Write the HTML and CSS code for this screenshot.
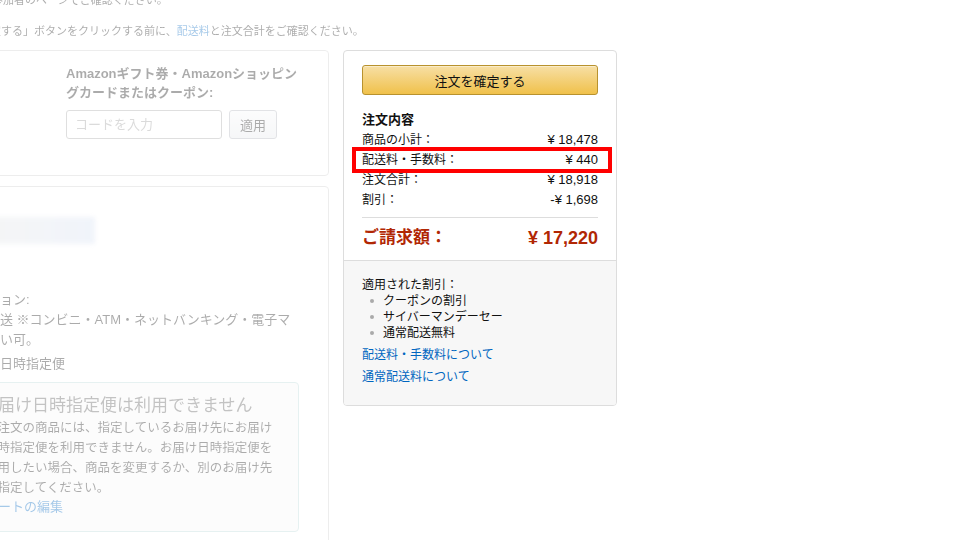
FILE: index.html
```html
<!DOCTYPE html>
<html lang="ja">
<head>
    <meta charset="UTF-8">
    <meta name="viewport" content="width=device-width, initial-scale=1.0">
    <title>注文の確定 | Amazon.co.jp</title>
    <link rel="stylesheet" href="styles.css">
</head>
<body>
    <div class="notes">
        <p class="note-first">参加者のページでご確認ください。</p>
        <p class="note-second">「注文を確定する」ボタンをクリックする前に、<a href="#">配送料</a>と注文合計をご確認ください。</p>
    </div>

    <div class="checkout">
        <div class="left-col">
            <div class="box payment-box">
                <div class="pay-methods"></div>
                <div class="coupon">
                    <label for="claimCode">Amazonギフト券・Amazonショッピングカードまたはクーポン:</label>
                    <div class="coupon-row">
                        <input type="text" id="claimCode" placeholder="コードを入力">
                        <button type="button" class="btn-apply">適用</button>
                    </div>
                </div>
            </div>

            <div class="box shipment-box">
                <div class="ship-col">
                    <div class="address-blur"></div>
                    <p class="ship-title">配送オプション:</p>
                    <p class="ship-option"><span class="radio"></span>通常配送 ※コンビニ・ATM・ネットバンキング・電子マ<br><span class="radio-pad"></span>ネー払い可。</p>
                    <p class="ship-option second"><span class="radio"></span>お届け日時指定便</p>

                    <div class="alert">
                        <h4>お届け日時指定便は利用できません</h4>
                        <p>ご注文の商品には、指定しているお届け先にお届け<br>日時指定便を利用できません。お届け日時指定便を<br>利用したい場合、商品を変更するか、別のお届け先<br>を指定してください。</p>
                        <a href="#">カートの編集</a>
                    </div>
                </div>
            </div>
        </div>

        <aside class="summary">
            <div class="summary-main">
                <button type="button" class="btn-place">注文を確定する</button>
                <h3>注文内容</h3>
                <div class="row"><span>商品の小計：</span><span class="amount">¥ 18,478</span></div>
                <div class="row marked"><span>配送料・手数料：</span><span class="amount">¥ 440</span></div>
                <div class="row"><span>注文合計：</span><span class="amount">¥ 18,918</span></div>
                <div class="row"><span>割引：</span><span class="amount">-¥ 1,698</span></div>
                <div class="total"><span>ご請求額：</span><span>¥ 17,220</span></div>
            </div>
            <div class="summary-foot">
                <p>適用された割引：</p>
                <ul>
                    <li>クーポンの割引</li>
                    <li>サイバーマンデーセー</li>
                    <li>通常配送無料</li>
                </ul>
                <a href="#">配送料・手数料について</a>
                <a href="#">通常配送料について</a>
            </div>
        </aside>
    </div>
</body>
</html>
```

FILE: styles.css
```css
body {
    margin: 0;
    background-color: #fff;
    color: #111;
    font-family: "Liberation Sans", Arial, "Noto Sans CJK JP", sans-serif;
    font-size: 12px;
    line-height: 20px;
    overflow: hidden;
}
a {
    color: #0066c0;
    text-decoration: none;
}
p {
    margin: 0;
}

/* faded part of the page */
.notes,
.left-col {
    opacity: 0.35;
}
.notes {
    font-size: 11px;
    white-space: nowrap;
}
.note-first {
    margin-top: -10px;
    margin-left: -8px;
}
.note-second {
    margin-top: 11px;
    margin-left: -65px;
}

.checkout {
    display: flex;
    gap: 14px;
    margin-top: 9px;
    margin-left: -300px;
    align-items: flex-start;
}
.left-col {
    width: 629px;
    display: flex;
    flex-direction: column;
    gap: 10px;
    font-size: 13px;
}
.box {
    border: 1px solid #ccc;
    border-radius: 4px;
}

/* gift card / coupon */
.payment-box {
    display: flex;
    padding: 13px 0 36px;
}
.pay-methods {
    width: 365px;
}
.coupon {
    width: 238px;
}
.coupon label {
    display: block;
    font-weight: bold;
    line-height: 19px;
}
.coupon-row {
    display: flex;
    gap: 7px;
    margin-top: 8px;
}
.coupon-row input {
    width: 156px;
    height: 29px;
    box-sizing: border-box;
    border: 1px solid #a6a6a6;
    border-radius: 3px;
    padding: 0 8px;
    font-family: inherit;
    font-size: 13px;
}
.coupon-row input::placeholder {
    color: #999;
}
.btn-apply {
    width: 48px;
    height: 29px;
    border: 1px solid #adb1b8;
    border-radius: 3px;
    background: linear-gradient(#f7f8fa, #e7e9ec);
    font-family: inherit;
    font-size: 13px;
    color: #111;
}

/* shipment */
.shipment-box {
    height: 400px;
    padding: 30px 29px 0 238px;
}
.address-blur {
    width: 156px;
    height: 27px;
    background: linear-gradient(90deg, #e4e4e4, #e2e4e8 40%, #dde3ee 70%, #d6e0f2);
    filter: blur(2px);
    margin-bottom: 46px;
}
.ship-title {
    margin-left: -4px;
}
.ship-option {
    white-space: nowrap;
}
.ship-option.second {
    margin-top: 4px;
}
.radio,
.radio-pad {
    display: inline-block;
    width: 22px;
}
.alert {
    margin: 8px 0 0 31px;
    padding: 11px 12px 15px 14px;
    border: 1px solid #b8d8d8;
    border-radius: 4px;
    background-color: #f9f9f9;
    white-space: nowrap;
}
.alert h4 {
    margin: 0 0 0 -4px;
    font-size: 17px;
    font-weight: normal;
    line-height: 24px;
    color: #555;
}
.alert p {
    font-size: 12.5px;
}
.alert a {
    display: block;
    line-height: 18px;
}

/* order summary */
.summary {
    width: 274px;
    box-sizing: border-box;
    border: 1px solid #ddd;
    border-radius: 4px;
    overflow: hidden;
}
.summary-main {
    padding: 14px 18px 10px;
}
.btn-place {
    width: 100%;
    height: 30px;
    border: 1px solid #b8922e;
    border-radius: 3px;
    background: linear-gradient(#f7dfa5, #f0c14b);
    font-family: inherit;
    font-size: 13px;
    color: #111;
    box-shadow: inset 0 1px 0 rgba(255, 255, 255, 0.4);
}
.summary h3 {
    margin: 15px 0 0;
    font-size: 13px;
    line-height: 20px;
}
.row {
    display: flex;
    justify-content: space-between;
}
.amount {
    font-size: 13px;
}
.row.marked {
    position: relative;
}
.row.marked::after {
    content: "";
    position: absolute;
    top: -3px;
    bottom: -3px;
    left: -10px;
    right: -14px;
    border: 4px solid #f00;
}
.total {
    display: flex;
    justify-content: space-between;
    margin-top: 7px;
    padding-top: 8px;
    border-top: 1px solid #ddd;
    font-size: 17px;
    font-weight: bold;
    line-height: 24px;
    color: #b12704;
}
.total span:last-child {
    font-size: 18px;
}
.summary-foot {
    border-top: 1px solid #ddd;
    background-color: #f7f7f7;
    padding: 16px 18px 20px;
    line-height: 16px;
}
.summary-foot ul {
    list-style: none;
    margin: 0 0 6px;
    padding-left: 21px;
}
.summary-foot li {
    position: relative;
}
.summary-foot li::before {
    content: "";
    position: absolute;
    left: -13px;
    top: 6px;
    width: 4px;
    height: 4px;
    border-radius: 50%;
    background-color: #aaa;
}
.summary-foot a {
    display: block;
    margin-bottom: 6px;
}
.summary-foot a:last-child {
    margin-bottom: 0;
}
```
